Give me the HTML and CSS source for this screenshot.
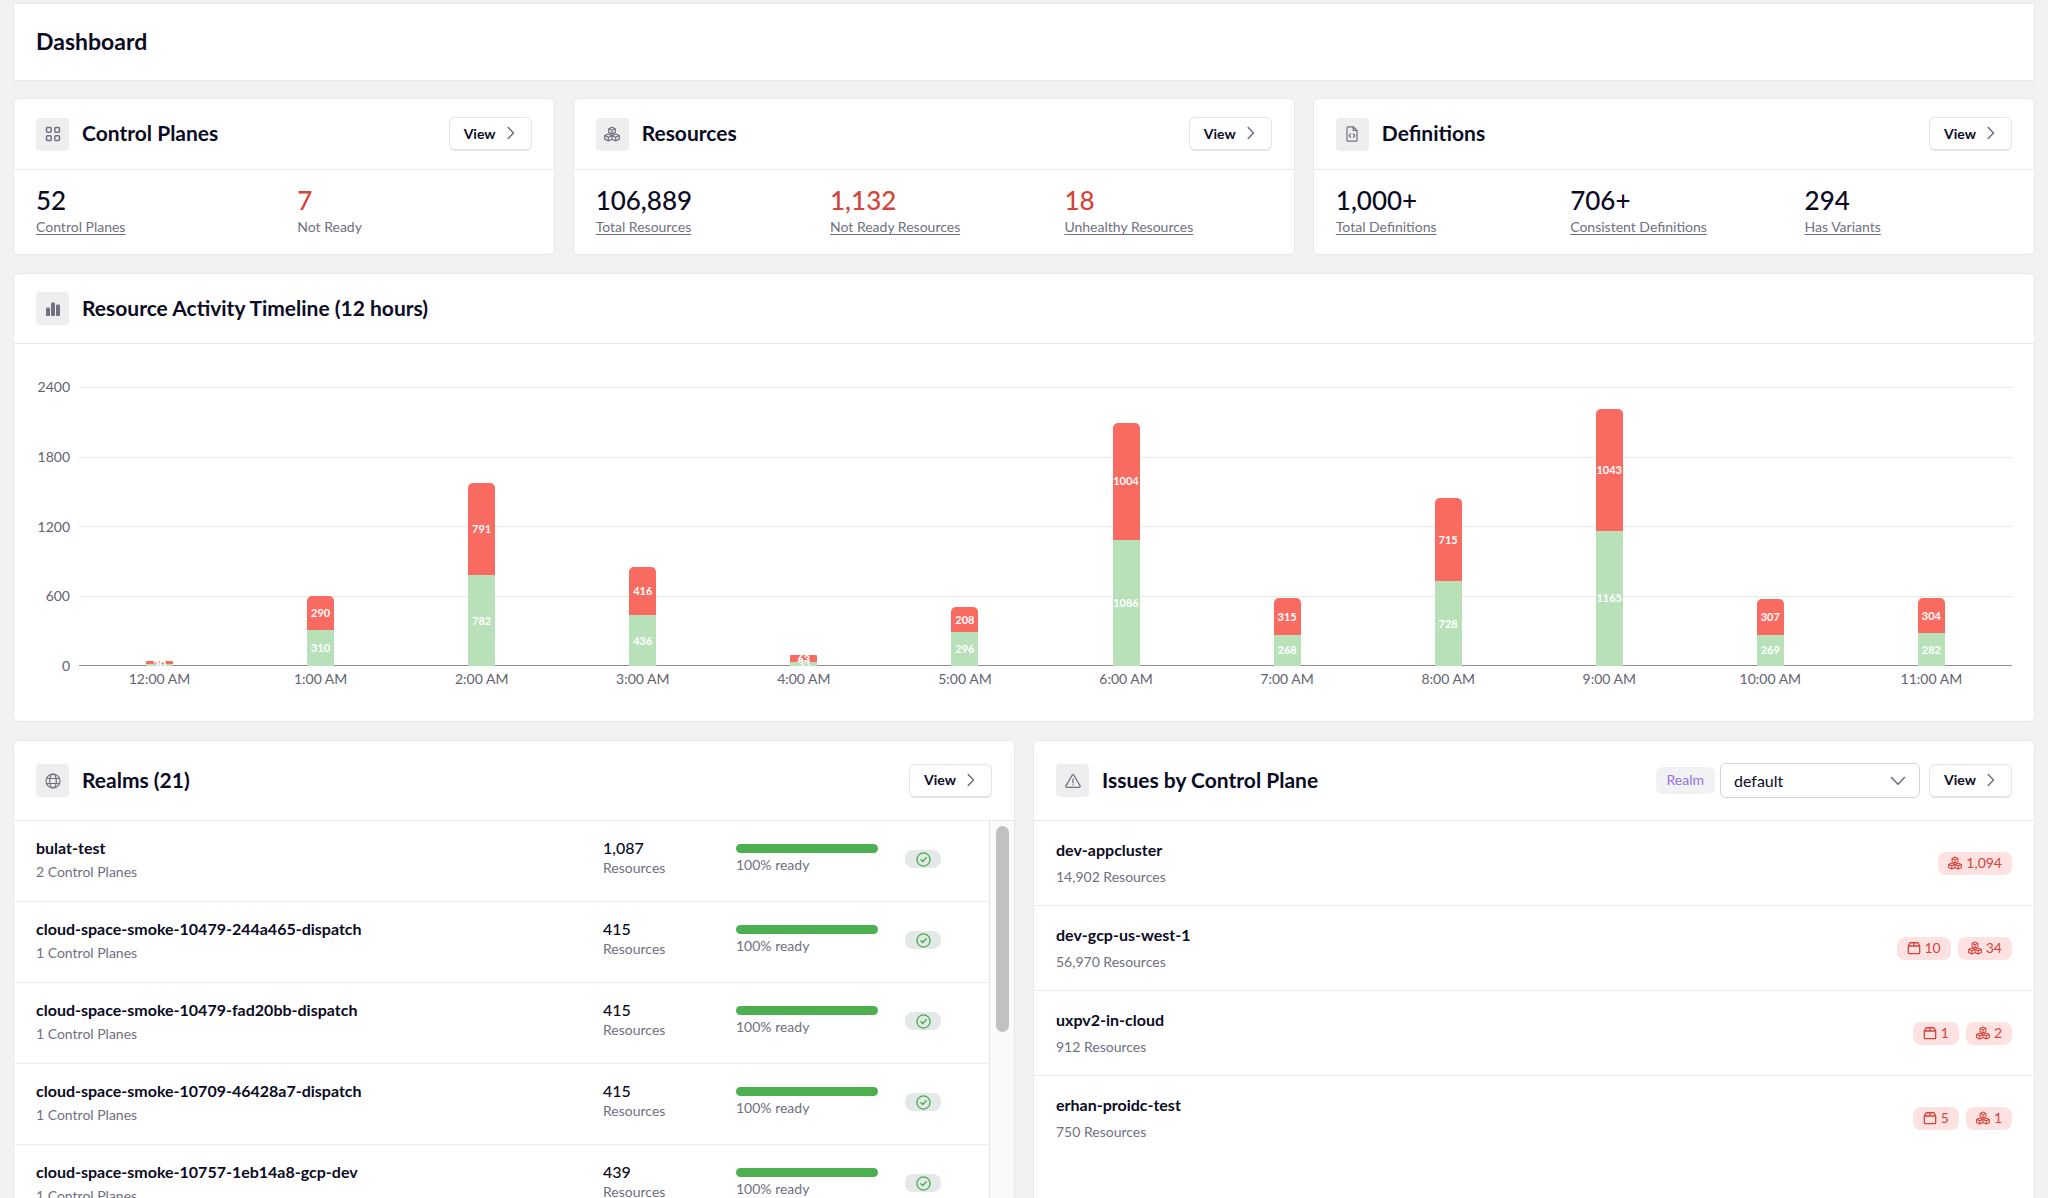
FILE: index.html
```html
<!DOCTYPE html>
<html lang="en">
<head>
    <meta charset="UTF-8">
    <meta name="viewport" content="width=device-width, initial-scale=1.0">
    <title>Dashboard</title>
    <link rel="stylesheet" href="styles.css">
</head>
<body>
    <!-- shared icons -->
    <svg class="sprite" aria-hidden="true">
        <symbol id="i-grid" viewBox="0 0 16 16"><g fill="none" stroke="currentColor" stroke-width="1.5"><rect x="1.5" y="1.5" width="4.7" height="4.7" rx="1"/><rect x="9.8" y="1.5" width="4.7" height="4.7" rx="1"/><rect x="1.5" y="9.8" width="4.7" height="4.7" rx="1"/><rect x="9.8" y="9.8" width="4.7" height="4.7" rx="1"/></g></symbol>
        <symbol id="i-cubes" viewBox="0 0 16 16"><g fill="none" stroke="currentColor" stroke-width="1.2" stroke-linejoin="round"><path d="M8 1.2l3.3 1.5v3.7L8 8 4.7 6.4V2.7zM4.7 2.7L8 4.3l3.3-1.6M8 4.3V8"/><path d="M4.3 8L8 9.6v3.6l-3.7 1.7-3.6-1.7V9.6zM.7 9.6l3.6 1.6L8 9.6M4.3 11.2v3.7"/><path d="M11.7 8l3.6 1.6v3.6l-3.6 1.7L8 13.2M8 9.6L11.7 8M8 9.6l3.7 1.6 3.6-1.6M11.7 11.2v3.7"/></g></symbol>
        <symbol id="i-doc" viewBox="0 0 16 16"><g fill="none" stroke="currentColor" stroke-width="1.2" stroke-linejoin="round" stroke-linecap="round"><path d="M3 1.8a1 1 0 0 1 1-1h5.2L13 4.5v9.7a1 1 0 0 1-1 1H4a1 1 0 0 1-1-1zM9.2.8v3.7H13M6.7 8L5.1 9.7l1.6 1.7M9.3 8l1.6 1.7-1.6 1.7"/></g></symbol>
        <symbol id="i-bars" viewBox="0 0 16 16"><g fill="currentColor"><rect x="1" y="6.5" width="4" height="8.5" rx="1.3"/><rect x="6" y="1.5" width="4" height="13.5" rx="1.3"/><rect x="11" y="3.5" width="4" height="11.5" rx="1.3"/></g></symbol>
        <symbol id="i-globe" viewBox="0 0 16 16"><g fill="none" stroke="currentColor" stroke-width="1.2"><circle cx="8" cy="8" r="7"/><ellipse cx="8" cy="8" rx="3.3" ry="7"/><path d="M1.5 5.5h13M1.5 10.5h13"/></g></symbol>
        <symbol id="i-warn" viewBox="0 0 16 16"><g fill="none" stroke="currentColor" stroke-width="1.3" stroke-linejoin="round" stroke-linecap="round"><path d="M7.1 2.2a1 1 0 0 1 1.8 0L15 12.8a1 1 0 0 1-.9 1.5H1.9a1 1 0 0 1-.9-1.5zM8 6.2v3.6M8 11.8v.2"/></g></symbol>
        <symbol id="i-right" viewBox="0 0 8 14"><path d="M1.2 1.5L6.5 7l-5.3 5.5" fill="none" stroke="currentColor" stroke-width="1.5" stroke-linecap="round" stroke-linejoin="round"/></symbol>
        <symbol id="i-down" viewBox="0 0 16 10"><path d="M1.5 1.5L8 8.2l6.5-6.7" fill="none" stroke="currentColor" stroke-width="1.6" stroke-linecap="round" stroke-linejoin="round"/></symbol>
        <symbol id="i-check" viewBox="0 0 16 16"><g fill="none" stroke="currentColor" stroke-width="1.4" stroke-linecap="round" stroke-linejoin="round"><circle cx="8" cy="8" r="7"/><path d="M5.2 8.3l2 1.9 3.7-4"/></g></symbol>
        <symbol id="i-box" viewBox="0 0 16 16"><g fill="none" stroke="currentColor" stroke-width="1.5" stroke-linejoin="round"><path d="M1.5 5.5L3.6 2h8.8l2.1 3.5v8a1 1 0 0 1-1 1h-11a1 1 0 0 1-1-1zM1.5 5.7h13M8 2v3.7"/></g></symbol>
    </svg>

    <div class="page">
        <header class="topbar">
            <h1>Dashboard</h1>
        </header>

        <div class="summary">
            <section class="card">
                <div class="card-head">
                    <span class="tile"><svg><use href="#i-grid"/></svg></span>
                    <h2>Control Planes</h2>
                    <button class="view" type="button">View <svg><use href="#i-right"/></svg></button>
                </div>
                <div class="stats two">
                    <div><strong>52</strong><a href="#">Control Planes</a></div>
                    <div class="bad"><strong>7</strong><span>Not Ready</span></div>
                </div>
            </section>
            <section class="card">
                <div class="card-head">
                    <span class="tile"><svg><use href="#i-cubes"/></svg></span>
                    <h2>Resources</h2>
                    <button class="view" type="button">View <svg><use href="#i-right"/></svg></button>
                </div>
                <div class="stats">
                    <div><strong>106,889</strong><a href="#">Total Resources</a></div>
                    <div class="bad"><strong>1,132</strong><a href="#">Not Ready Resources</a></div>
                    <div class="bad"><strong>18</strong><a href="#">Unhealthy Resources</a></div>
                </div>
            </section>
            <section class="card">
                <div class="card-head">
                    <span class="tile"><svg><use href="#i-doc"/></svg></span>
                    <h2>Definitions</h2>
                    <button class="view" type="button">View <svg><use href="#i-right"/></svg></button>
                </div>
                <div class="stats">
                    <div><strong>1,000+</strong><a href="#">Total Definitions</a></div>
                    <div><strong>706+</strong><a href="#">Consistent Definitions</a></div>
                    <div><strong>294</strong><a href="#">Has Variants</a></div>
                </div>
            </section>
        </div>

        <section class="card">
            <div class="card-head">
                <span class="tile"><svg><use href="#i-bars"/></svg></span>
                <h2>Resource Activity Timeline (12 hours)</h2>
            </div>
            <div class="chart">
                <div class="y-axis"><span>2400</span><span>1800</span><span>1200</span><span>600</span><span>0</span></div>
                <div class="plot">
                    <div class="lines"><i></i><i></i><i></i><i></i><i></i></div>
                    <!-- heights are value / 2400 -->
                    <div class="bars">
                        <div class="bar low"><b class="ok" style="height: 0.83%">20</b><b class="fail" style="height: 0.83%">20</b></div>
                        <div class="bar"><b class="ok" style="height: 12.92%">310</b><b class="fail" style="height: 12.08%">290</b></div>
                        <div class="bar"><b class="ok" style="height: 32.58%">782</b><b class="fail" style="height: 32.96%">791</b></div>
                        <div class="bar"><b class="ok" style="height: 18.17%">436</b><b class="fail" style="height: 17.33%">416</b></div>
                        <div class="bar low"><b class="ok" style="height: 1.38%">33</b><b class="fail" style="height: 2.62%">63</b></div>
                        <div class="bar"><b class="ok" style="height: 12.33%">296</b><b class="fail" style="height: 8.67%">208</b></div>
                        <div class="bar"><b class="ok" style="height: 45.25%">1086</b><b class="fail" style="height: 41.83%">1004</b></div>
                        <div class="bar"><b class="ok" style="height: 11.17%">268</b><b class="fail" style="height: 13.12%">315</b></div>
                        <div class="bar"><b class="ok" style="height: 30.33%">728</b><b class="fail" style="height: 29.79%">715</b></div>
                        <div class="bar"><b class="ok" style="height: 48.54%">1165</b><b class="fail" style="height: 43.46%">1043</b></div>
                        <div class="bar"><b class="ok" style="height: 11.21%">269</b><b class="fail" style="height: 12.79%">307</b></div>
                        <div class="bar"><b class="ok" style="height: 11.75%">282</b><b class="fail" style="height: 12.67%">304</b></div>
                    </div>
                </div>
                <div class="x-axis">
                    <span>12:00 AM</span><span>1:00 AM</span><span>2:00 AM</span><span>3:00 AM</span><span>4:00 AM</span><span>5:00 AM</span><span>6:00 AM</span><span>7:00 AM</span><span>8:00 AM</span><span>9:00 AM</span><span>10:00 AM</span><span>11:00 AM</span>
                </div>
            </div>
        </section>

        <div class="lists">
            <section class="card">
                <div class="card-head tall">
                    <span class="tile"><svg><use href="#i-globe"/></svg></span>
                    <h2>Realms (21)</h2>
                    <button class="view" type="button">View <svg><use href="#i-right"/></svg></button>
                </div>
                <div class="scroll">
                    <ul class="realms">
                        <li>
                            <div><h3>bulat-test</h3><p>2 Control Planes</p></div>
                            <div class="count"><b>1,087</b><p>Resources</p></div>
                            <div class="ready"><div class="meter"></div><p>100% ready</p></div>
                            <span class="status"><svg><use href="#i-check"/></svg></span>
                        </li>
                        <li>
                            <div><h3>cloud-space-smoke-10479-244a465-dispatch</h3><p>1 Control Planes</p></div>
                            <div class="count"><b>415</b><p>Resources</p></div>
                            <div class="ready"><div class="meter"></div><p>100% ready</p></div>
                            <span class="status"><svg><use href="#i-check"/></svg></span>
                        </li>
                        <li>
                            <div><h3>cloud-space-smoke-10479-fad20bb-dispatch</h3><p>1 Control Planes</p></div>
                            <div class="count"><b>415</b><p>Resources</p></div>
                            <div class="ready"><div class="meter"></div><p>100% ready</p></div>
                            <span class="status"><svg><use href="#i-check"/></svg></span>
                        </li>
                        <li>
                            <div><h3>cloud-space-smoke-10709-46428a7-dispatch</h3><p>1 Control Planes</p></div>
                            <div class="count"><b>415</b><p>Resources</p></div>
                            <div class="ready"><div class="meter"></div><p>100% ready</p></div>
                            <span class="status"><svg><use href="#i-check"/></svg></span>
                        </li>
                        <li>
                            <div><h3>cloud-space-smoke-10757-1eb14a8-gcp-dev</h3><p>1 Control Planes</p></div>
                            <div class="count"><b>439</b><p>Resources</p></div>
                            <div class="ready"><div class="meter"></div><p>100% ready</p></div>
                            <span class="status"><svg><use href="#i-check"/></svg></span>
                        </li>
                    </ul>
                    <div class="track"><div class="thumb"></div></div>
                </div>
            </section>

            <section class="card">
                <div class="card-head tall">
                    <span class="tile"><svg><use href="#i-warn"/></svg></span>
                    <h2>Issues by Control Plane</h2>
                    <div class="picker">
                        <label for="realm">Realm</label>
                        <div class="select">
                            <select id="realm"><option>default</option></select>
                            <svg><use href="#i-down"/></svg>
                        </div>
                    </div>
                    <button class="view" type="button">View <svg><use href="#i-right"/></svg></button>
                </div>
                <ul class="issues">
                    <li>
                        <div><h3>dev-appcluster</h3><p>14,902 Resources</p></div>
                        <div class="pills"><span class="pill"><svg><use href="#i-cubes"/></svg>1,094</span></div>
                    </li>
                    <li>
                        <div><h3>dev-gcp-us-west-1</h3><p>56,970 Resources</p></div>
                        <div class="pills"><span class="pill"><svg><use href="#i-box"/></svg>10</span><span class="pill"><svg><use href="#i-cubes"/></svg>34</span></div>
                    </li>
                    <li>
                        <div><h3>uxpv2-in-cloud</h3><p>912 Resources</p></div>
                        <div class="pills"><span class="pill"><svg><use href="#i-box"/></svg>1</span><span class="pill"><svg><use href="#i-cubes"/></svg>2</span></div>
                    </li>
                    <li>
                        <div><h3>erhan-proidc-test</h3><p>750 Resources</p></div>
                        <div class="pills"><span class="pill"><svg><use href="#i-box"/></svg>5</span><span class="pill"><svg><use href="#i-cubes"/></svg>1</span></div>
                    </li>
                </ul>
            </section>
        </div>
    </div>
</body>
</html>
```
FILE: styles.css
```css
* {
    margin: 0;
    padding: 0;
    box-sizing: border-box;
}
body {
    background: #f1f2f4;
    color: #0b0b24;
    font-family: Lato, "Noto Sans", sans-serif;
    font-size: 14px;
    line-height: 20px;
}
button,
select {
    font-family: inherit;
    color: inherit;
}
ul {
    list-style: none;
}
svg {
    display: block;
    flex: none;
}
.sprite {
    display: none;
}
.page {
    height: 100vh;
    overflow: hidden;
    padding: 3px 13px 0;
}
.topbar {
    background: #fff;
    border: 1px solid #e6e8ea;
    padding: 21px 22px 23px;
    margin-bottom: 17px;
}
.topbar h1 {
    font-size: 23px;
    line-height: 32px;
}
.card {
    background: #fff;
    border: 1px solid #e6e8ea;
    border-radius: 6px;
}
.summary {
    display: grid;
    grid-template-columns: 3fr 4fr 4fr;
    gap: 18px;
    margin-bottom: 18px;
}
.card-head {
    display: flex;
    align-items: center;
    padding: 18px 22px;
    border-bottom: 1px solid #e6e8ea;
}
.card-head.tall {
    height: 80px;
}
.card-head h2 {
    flex: 1;
    font-size: 21px;
    line-height: 28px;
    padding-bottom: 2px;
}
.tile {
    display: flex;
    align-items: center;
    justify-content: center;
    width: 33px;
    height: 33px;
    margin-right: 13px;
    border-radius: 4px;
    background: #eeeeef;
    color: #6f7080;
}
.tile svg {
    width: 16px;
    height: 16px;
}
.view {
    display: flex;
    align-items: center;
    justify-content: space-between;
    width: 83px;
    height: 34px;
    padding: 0 16px 1px 14px;
    border: 1px solid #e3e4e6;
    border-bottom-width: 2px;
    border-radius: 6px;
    background: #fff;
    font-size: 14px;
    font-weight: 700;
}
.view svg {
    width: 8px;
    height: 14px;
    color: #6f7080;
}

/* summary numbers */
.stats {
    display: grid;
    grid-template-columns: repeat(3, 1fr);
    gap: 27px;
    padding: 14px 22px 17px;
}
.stats.two {
    grid-template-columns: repeat(2, 1fr);
}
.stats strong {
    display: block;
    margin-bottom: 1px;
    font-size: 26px;
    font-weight: 500;
    line-height: 32px;
}
.stats a,
.stats span {
    display: block;
    width: fit-content;
    color: #6f7080;
}
.stats a {
    text-underline-offset: 2px;
}
.stats .bad strong {
    color: #d5433b;
}

/* chart */
.chart {
    display: grid;
    grid-template-columns: 34px 1fr;
    column-gap: 9px;
    padding: 43px 22px 32px;
    color: #62636f;
}
.y-axis {
    display: flex;
    flex-direction: column;
    justify-content: space-between;
    margin: -10px 0;
    text-align: right;
}
.plot {
    position: relative;
    height: 279px;
}
.lines {
    position: absolute;
    inset: 0;
    display: flex;
    flex-direction: column;
    justify-content: space-between;
}
.lines i {
    height: 1px;
    background: #e7e8ea;
}
.lines i:last-child {
    background: #8b8c94;
}
.bars {
    position: relative;
    display: flex;
    height: 100%;
}
.bar {
    flex: 1;
    display: flex;
    flex-direction: column-reverse;
    align-items: center;
}
.bar b {
    display: flex;
    align-items: center;
    justify-content: center;
    width: 27px;
    color: #fff;
    font-size: 11px;
    line-height: 12px;
}
.ok {
    background: #b8e1ba;
}
.fail {
    background: #f96a60;
    border-radius: 5px 5px 0 0;
}
.low .fail {
    border-radius: 1px 1px 0 0;
}
.x-axis {
    grid-column: 2;
    display: flex;
    margin-top: 3px;
}
.x-axis span {
    flex: 1;
    text-align: center;
}

/* lists */
.lists {
    display: grid;
    grid-template-columns: 1fr 1fr;
    gap: 18px;
    margin-top: 18px;
}
.lists h3 {
    font-size: 16px;
    line-height: 20px;
}
.lists p {
    color: #6f7080;
}
.scroll {
    display: flex;
    height: 590px;
    overflow: hidden;
}
.realms {
    flex: 1;
}
.realms li {
    display: grid;
    grid-template-columns: 1fr 133px 169px 62px;
    height: 81px;
    padding: 17px 22px 0;
    border-bottom: 1px solid #ebecee;
}
.realms h3 {
    margin-bottom: 4px;
}
.count b {
    display: block;
    font-size: 16px;
    font-weight: 500;
}
.meter {
    width: 142px;
    height: 9px;
    margin: 6px 0 2px;
    border-radius: 5px;
    background: #4caf50;
}
.status {
    display: flex;
    align-items: center;
    justify-content: center;
    width: 36px;
    height: 18px;
    margin-top: 12px;
    border-radius: 8px;
    background: #e5e8e9;
    color: #43ad47;
}
.status svg {
    width: 15px;
    height: 15px;
}
.track {
    width: 25px;
    padding: 5px 5px 0 6px;
    border-left: 1px solid #e3e4e6;
    background: #fafafb;
}
.thumb {
    width: 13px;
    height: 206px;
    border-radius: 7px;
    background: #c1c1c3;
}
.picker {
    display: flex;
    align-items: center;
    gap: 5px;
    margin-right: 9px;
}
.picker label {
    padding: 3px 11px 4px;
    border-radius: 6px;
    background: #f1f2f4;
    color: #9a6fe0;
}
.select {
    position: relative;
}
.select select {
    appearance: none;
    width: 200px;
    height: 35px;
    padding: 0 13px 1px;
    border: 1px solid #d3d4d8;
    border-radius: 6px;
    background: #fff;
    font-size: 16px;
}
.select svg {
    position: absolute;
    top: 13px;
    right: 14px;
    width: 16px;
    height: 10px;
    color: #6f7080;
    pointer-events: none;
}
.issues li {
    display: flex;
    align-items: center;
    justify-content: space-between;
    height: 85px;
    padding: 0 22px;
    border-bottom: 1px solid #ebecee;
}
.issues li:last-child {
    border-bottom: 0;
}
.issues h3 {
    margin-bottom: 7px;
}
.pills {
    display: flex;
    gap: 7px;
}
.pill {
    display: flex;
    align-items: center;
    gap: 4px;
    padding: 1px 10px 2px;
    border-radius: 8px;
    background: #fee2e1;
    color: #d5433b;
}
.pill svg {
    width: 14px;
    height: 14px;
}
```
